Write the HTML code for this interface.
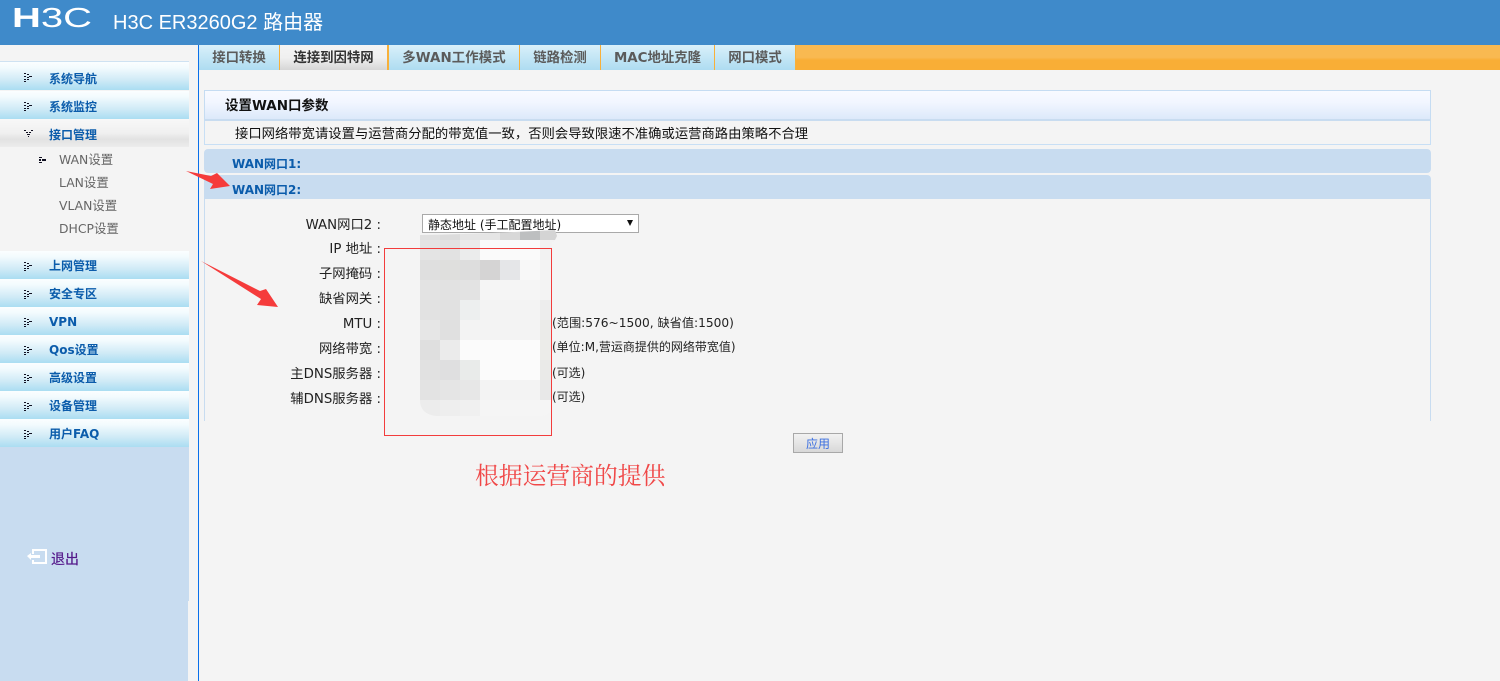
<!DOCTYPE html>
<html><head><meta charset="utf-8">
<style>
html,body{margin:0;padding:0;width:1500px;height:681px;overflow:hidden;background:#f4f4f4}
body{position:relative;font-family:"DejaVu Sans","Noto Sans CJK SC",sans-serif;font-size:13.33px;color:#222}
.a{position:absolute;white-space:nowrap}
.t{position:absolute;white-space:nowrap;line-height:16px}
.n{position:absolute;left:0;width:189px;height:28px;background:linear-gradient(#fbfeff 0,#f3fbfe 20%,#cfeaf6 65%,#aaddf2 100%)}
.n b{position:absolute;left:49px;top:7px;font-size:12px;line-height:16px;color:#0b5cab;white-space:nowrap}
.n svg{position:absolute;left:24px;top:11px}
.tab{position:absolute;top:45px;height:25px;background:linear-gradient(#d9f0fa,#aedcf1);text-align:center;font-weight:bold;color:#5b5b5b;line-height:27px;font-size:13.4px;white-space:nowrap}
.sub{position:absolute;left:59px;color:#666;font-size:12.4px;line-height:16px;white-space:nowrap}
.l{position:absolute;width:120px;left:261px;text-align:right;line-height:16px;white-space:nowrap;color:#222}
.bar{position:absolute;left:204px;width:1227px;height:24px;background:#c8dcf0;border-radius:4px 4px 0 0}
.bar b{position:absolute;left:28px;top:6px;color:#0b5cab;font-size:12px;line-height:16px}
.note{position:absolute;line-height:16px;white-space:nowrap;font-size:12px;color:#222}
</style></head><body>
<svg width="0" height="0" style="position:absolute"><defs>
<symbol id="d" viewBox="0 0 8 9"><path fill="#112" d="M0 0h2v1H0zM3 1h2v1H3zM0 3h2v1H0zM5 3h3v1H5zM3 4h2v1H3zM0 6h2v1H0zM3 6h2v1H3zM0 8h2v1H0z"/></symbol>
</defs></svg>

<div class="a" style="left:0;top:0;width:1500px;height:45px;background:#3f8aca"></div>
<svg class="a" style="left:10px;top:4px" width="86" height="26"><text x="2" y="23" font-family="Liberation Sans" font-size="28" fill="#fff" textLength="80" lengthAdjust="spacingAndGlyphs"><tspan font-weight="bold">H</tspan>3C</text></svg>
<div class="a" style="left:113px;top:11px;font:20px/24px 'Liberation Sans','Noto Sans CJK SC',sans-serif;color:#fff">H3C ER3260G2 路由器</div>

<!-- sidebar -->
<div class="a" style="left:0;top:61px;width:189px;height:1px;background:#cfe2f2"></div>
<div class="n" style="top:62px"><svg width="8" height="9"><use href="#d"/></svg><b style="top:9px">系统导航</b></div>
<div class="n" style="top:91px;height:28px"><svg width="8" height="9"><use href="#d"/></svg><b style="top:8px">系统监控</b></div>
<div class="n" style="top:119px;background:linear-gradient(#f8f8f8,#f0f0f0 50%,#e2e2e2 72%,#ececec)"><svg width="9" height="8"><path fill="#112" d="M0 0h2v1H0zM7 0h2v1H7zM2 2h2v1H2zM5 2h2v1H5zM3 4h3v1H3zM4 6h1v1H4z"/></svg><b style="top:8px">接口管理</b></div>
<svg class="a" style="left:39px;top:157px" width="8" height="6"><path fill="#112" d="M0 0h3v1H0zM3 2h4v2H3zM0 2h2v2H0zM0 5h3v1H0z"/></svg>
<div class="sub" style="top:152px">WAN设置</div>
<div class="sub" style="top:175px">LAN设置</div>
<div class="sub" style="top:198px">VLAN设置</div>
<div class="sub" style="top:221px">DHCP设置</div>
<div class="n" style="top:251px"><svg width="8" height="9"><use href="#d"/></svg><b>上网管理</b></div>
<div class="n" style="top:279px"><svg width="8" height="9"><use href="#d"/></svg><b>安全专区</b></div>
<div class="n" style="top:307px"><svg width="8" height="9"><use href="#d"/></svg><b>VPN</b></div>
<div class="n" style="top:335px"><svg width="8" height="9"><use href="#d"/></svg><b>Qos设置</b></div>
<div class="n" style="top:363px"><svg width="8" height="9"><use href="#d"/></svg><b>高级设置</b></div>
<div class="n" style="top:391px"><svg width="8" height="9"><use href="#d"/></svg><b>设备管理</b></div>
<div class="n" style="top:419px"><svg width="8" height="9"><use href="#d"/></svg><b>用户FAQ</b></div>
<div class="a" style="left:0;top:447px;width:189px;height:154px;background:#c8dcf0"></div>
<div class="a" style="left:0;top:601px;width:188px;height:80px;background:#c8dcf0"></div>
<svg class="a" style="left:27px;top:549px" width="20" height="16"><path fill="#fff" d="M5 0h15v15H5v-4h2v2h11V2H7v3H5zM0 7l4-3v2h9v3H4v2z"/></svg>
<div class="a" style="left:51px;top:552px;line-height:16px;color:#551a8b;font-size:14px;-webkit-text-stroke:.2px #551a8b">退出</div>

<!-- divider -->
<div class="a" style="left:198px;top:45px;width:1px;height:636px;background:#0a70ea"></div>

<!-- tabs -->
<div class="a" style="left:796px;top:45px;width:704px;height:25px;background:linear-gradient(#f9b951 0,#f9b951 50%,#f9ae36 60%,#f9ae36 100%)"></div>
<div class="a" style="left:199px;top:45px;width:597px;height:25px;background:#f8b03a"></div>
<div class="tab" style="left:199px;width:80px">接口转换</div>
<div class="tab" style="left:280px;width:107px;background:linear-gradient(#f4f4f4,#f0f0f0 50%,#d6d6d6);color:#333">连接到因特网</div>
<div class="tab" style="left:389px;width:130px;letter-spacing:.1px">多WAN工作模式</div>
<div class="tab" style="left:520px;width:80px">链路检测</div>
<div class="tab" style="left:601px;width:113px">MAC地址克隆</div>
<div class="tab" style="left:715px;width:80px">网口模式</div>

<!-- panel -->
<div class="a" style="left:204px;top:90px;width:1225px;height:28px;border:1px solid #c5dcf2;border-bottom:2px solid #c8dcf0;background:linear-gradient(#f8faff,#f2f6ff 40%,#dce9fa)"></div>
<div class="t" style="left:225px;top:97px;font-weight:bold;color:#111;font-size:13.5px;line-height:18px">设置WAN口参数</div>
<div class="a" style="left:204px;top:121px;width:1225px;height:23px;border:1px solid #c8dff5;border-top:0"></div>
<div class="t" style="left:235px;top:126px;color:#111;font-size:13.33px;line-height:18px">接口网络带宽请设置与运营商分配的带宽值一致，否则会导致限速不准确或运营商路由策略不合理</div>
<div class="bar" style="top:149px;border-radius:4px"><b style="top:7px">WAN网口1:</b></div>
<div class="bar" style="top:175px"><b style="top:7px">WAN网口2:</b></div>
<div class="a" style="left:204px;top:199px;width:1225px;height:222px;border-left:1px solid #c8dcf0;border-right:1px solid #c8dcf0"></div>

<!-- form -->
<div class="l" style="top:218px">WAN网口2 :</div>
<div class="l" style="top:242px">IP 地址 :</div>
<div class="l" style="top:267px">子网掩码 :</div>
<div class="l" style="top:292px">缺省网关 :</div>
<div class="l" style="top:317px">MTU :</div>
<div class="l" style="top:342px">网络带宽 :</div>
<div class="l" style="top:367px">主DNS服务器 :</div>
<div class="l" style="top:392px">辅DNS服务器 :</div>

<div class="a" style="left:422px;top:214px;width:215px;height:17px;background:#fff;border:1px solid #a9a9a9"></div>
<div class="a" style="left:428px;top:217px;line-height:16px;font-size:12px;color:#111">静态地址 (手工配置地址)</div>
<svg class="a" style="left:626px;top:220px" width="8" height="6"><path d="M1 0h6L4 6z" fill="#111"/></svg>

<!-- mosaic -->
<svg class="a" style="left:420px;top:228px" width="140" height="192" shape-rendering="crispEdges">
<defs><clipPath id="c"><path d="M0 7Q60 6 135 2l2 6-3 6-2 0V178q0 10-12 10L30 188H16Q0 186 0 172z"/></clipPath></defs>
<g clip-path="url(#c)">
<rect x="0" y="0" width="20" height="12" fill="#e0e0e0"/><rect x="20" y="0" width="20" height="12" fill="#dcdcdc"/><rect x="40" y="0" width="20" height="12" fill="#e5e5e5"/><rect x="60" y="0" width="20" height="12" fill="#e5e5e5"/><rect x="80" y="0" width="20" height="12" fill="#d8d8d8"/><rect x="100" y="0" width="20" height="12" fill="#bdbfc0"/><rect x="120" y="0" width="20" height="12" fill="#d4d4d4"/>
<rect x="0" y="12" width="20" height="20" fill="#e4e4e4"/><rect x="20" y="12" width="20" height="20" fill="#e2e2e2"/><rect x="40" y="12" width="20" height="20" fill="#ebecec"/><rect x="60" y="12" width="60" height="20" fill="#fafafa"/><rect x="120" y="12" width="20" height="20" fill="#f2f2f2"/>
<rect x="0" y="32" width="20" height="20" fill="#dfdfdf"/><rect x="20" y="32" width="20" height="20" fill="#dfdfdd"/><rect x="40" y="32" width="20" height="20" fill="#ddd"/><rect x="60" y="32" width="20" height="20" fill="#d5d4d4"/><rect x="80" y="32" width="20" height="20" fill="#e5e6e8"/><rect x="100" y="32" width="20" height="20" fill="#f8f8f8"/><rect x="120" y="32" width="20" height="20" fill="#f3f3f3"/>
<rect x="0" y="52" width="20" height="20" fill="#e3e3e3"/><rect x="20" y="52" width="20" height="20" fill="#e2e2e2"/><rect x="40" y="52" width="20" height="20" fill="#e3e3e3"/><rect x="60" y="52" width="60" height="20" fill="#f5f5f5"/><rect x="120" y="52" width="20" height="20" fill="#f3f3f3"/>
<rect x="0" y="72" width="20" height="20" fill="#e2e2e2"/><rect x="20" y="72" width="20" height="20" fill="#e1e1e1"/><rect x="40" y="72" width="20" height="20" fill="#edefef"/><rect x="60" y="72" width="60" height="20" fill="#f3f3f3"/><rect x="120" y="72" width="20" height="20" fill="#ededed"/>
<rect x="0" y="92" width="20" height="20" fill="#e6e6e6"/><rect x="20" y="92" width="20" height="20" fill="#e0e0e0"/><rect x="40" y="92" width="80" height="20" fill="#f3f3f3"/><rect x="120" y="92" width="20" height="20" fill="#ebebe9"/>
<rect x="0" y="112" width="20" height="20" fill="#dfdfdf"/><rect x="20" y="112" width="20" height="20" fill="#ebebeb"/><rect x="40" y="112" width="80" height="20" fill="#fbfbfb"/><rect x="120" y="112" width="20" height="20" fill="#ecece9"/>
<rect x="0" y="132" width="20" height="20" fill="#e1e1e1"/><rect x="20" y="132" width="20" height="20" fill="#dfdfe0"/><rect x="40" y="132" width="20" height="20" fill="#e9ebea"/><rect x="60" y="132" width="60" height="20" fill="#fbfbfb"/><rect x="120" y="132" width="20" height="20" fill="#eaeae8"/>
<rect x="0" y="152" width="20" height="20" fill="#e3e3e3"/><rect x="20" y="152" width="20" height="20" fill="#e5e5e5"/><rect x="40" y="152" width="20" height="20" fill="#e7e7e7"/><rect x="60" y="152" width="60" height="20" fill="#f3f3f3"/><rect x="120" y="152" width="20" height="20" fill="#e8e8e8"/>
<rect x="0" y="172" width="20" height="20" fill="#ececec"/><rect x="20" y="172" width="20" height="20" fill="#eee"/><rect x="40" y="172" width="20" height="20" fill="#f0f0f0"/><rect x="60" y="172" width="80" height="20" fill="#f5f5f5"/>
</g></svg>
<div class="a" style="left:384px;top:248px;width:166px;height:186px;border:1px solid #f23c3c"></div>

<div class="note" style="left:552px;top:315px;font-size:12.2px">(范围:576~1500, 缺省值:1500)</div>
<div class="note" style="left:552px;top:339px">(单位:M,营运商提供的网络带宽值)</div>
<div class="note" style="left:552px;top:365px">(可选)</div>
<div class="note" style="left:552px;top:389px">(可选)</div>

<div class="a" style="left:793px;top:433px;width:48px;height:18px;border:1px solid #a8a8a8;background:linear-gradient(#f2f2f2,#d8d8d8);text-align:center;line-height:21px;font-size:12px;color:#3b6fe0">应用</div>

<div class="a" style="left:475px;top:458px;font:23.8px/32px 'Noto Serif CJK SC',serif;color:#f04848">根据运营商的提供</div>

<!-- arrows -->
<svg class="a" style="left:180px;top:160px" width="110" height="160"><path fill="#f53b3b" d="M6 11L31 16 37 13 50 26 30 29 33 24z"/><path fill="#f53b3b" d="M21 101L80 131 86 129 98 147 77 145 81 139z"/></svg>
</body></html>
